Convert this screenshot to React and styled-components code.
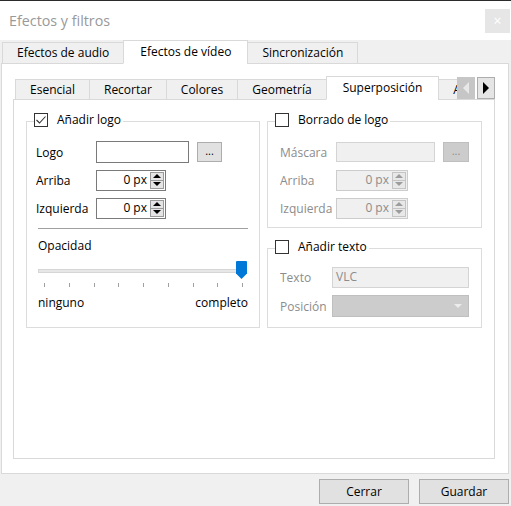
import React from "react";
import styled, { createGlobalStyle } from "styled-components";

const GlobalStyle = createGlobalStyle`
  html, body {
    margin: 0;
    padding: 0;
    background: #f0f0f0;
  }
  body {
    font-family: "Open Sans", "Noto Sans", sans-serif;
    font-size: 12px;
    color: #000;
  }
  * {
    box-sizing: border-box;
  }
`;

const Window = styled.div`
  width: 511px;
  height: 506px;
  display: flex;
  flex-direction: column;
  background: #f0f0f0;
  overflow: hidden;
`;

const TitleBar = styled.div`
  height: 40px;
  flex: none;
  border-top: 1px solid #2b2b2b;
  background: #fff;
  display: flex;
  align-items: center;
  justify-content: space-between;
  padding-left: 9px;
`;

const Title = styled.span`
  font-size: 14.3px;
  color: #999;
  line-height: 18px;
`;

const CloseButton = styled.div`
  width: 25px;
  height: 24px;
  margin-right: 1px;
  background: #e6e6e6;
  color: #fff;
  font-size: 14px;
  display: flex;
  align-items: center;
  justify-content: center;
`;

const TabBar = styled.div`
  display: flex;
  align-items: flex-end;
  height: 24px;
  flex: none;
  margin-bottom: -1px;
  padding-left: 2px;
  position: relative;
  z-index: 1;
`;

const Tab = styled.div`
  flex: none;
  height: ${(p) => (p.$active ? 24 : p.$h)}px;
  padding: 0 ${(p) => (p.$active ? 16 : 14)}px;
  margin-left: -1px;
  border: 1px solid #d9d9d9;
  border-bottom-color: ${(p) => (p.$active ? "#fff" : "#d9d9d9")};
  background: ${(p) => (p.$active ? "#fff" : "#f0f0f0")};
  display: flex;
  align-items: center;
  white-space: nowrap;
  line-height: 16px;

  &:first-child {
    margin-left: 0;
  }
`;

const OuterPane = styled.div`
  height: 411px;
  flex: none;
  margin: 0 2px 0 1px;
  border: 1px solid #d9d9d9;
  background: #fff;
  padding: 12px 13px 0 11px;
`;

const InnerTabRow = styled.div`
  display: flex;
  height: 24px;
  margin-bottom: -1px;
  position: relative;
  z-index: 1;
`;

const TabViewport = styled.div`
  width: 442px;
  margin-left: 2px;
  overflow: hidden;
  display: flex;
  align-items: flex-end;
`;

const ScrollButtons = styled.div`
  display: flex;
  gap: 2px;
  margin-top: 1px;
  height: 22px;
`;

const ScrollButton = styled.div`
  width: 18px;
  height: 22px;
  display: flex;
  align-items: center;
  justify-content: center;
  background: ${(p) => (p.$disabled ? "#c6c6c6" : "#e5e5e5")};
  border: 1px solid ${(p) => (p.$disabled ? "#c6c6c6" : "#adadad")};
`;

const Arrow = styled.span`
  width: 0;
  height: 0;
  border-top: 6px solid transparent;
  border-bottom: 6px solid transparent;
  ${(p) =>
    p.$dir === "left"
      ? `border-right: 6px solid ${p.$color};`
      : `border-left: 6px solid ${p.$color};`}
`;

const InnerPane = styled.div`
  height: 360px;
  border: 1px solid #d9d9d9;
  background: #fff;
  padding: 21px 12px 0 12px;
`;

const ContentGrid = styled.div`
  display: grid;
  grid-template-columns: 234px 215px;
  column-gap: 7px;
  align-items: stretch;
`;

const Column = styled.div`
  display: flex;
  flex-direction: column;
`;

const GroupBox = styled.div`
  border: 1px solid #dcdcdc;
  display: flex;
  flex-direction: column;
  margin-top: ${(p) => p.$mt || 0}px;
  padding: 0 ${(p) => p.$pr}px ${(p) => p.$pb || 0}px ${(p) => p.$pl}px;
`;

const GroupHeader = styled.div`
  display: flex;
  align-items: center;
  gap: 9px;
  height: 14px;
  margin-top: -9px;
  margin-left: ${(p) => p.$ml}px;
  padding-right: 2px;
  align-self: flex-start;
  background: #fff;
  line-height: 16px;
`;

const Check = styled.span`
  width: 14px;
  height: 14px;
  flex: none;
  border: 1px solid #333;
  background: #fff;
  display: flex;
  align-items: center;
  justify-content: center;
`;

const Rows = styled.div`
  display: flex;
  flex-direction: column;
  gap: ${(p) => p.$gap}px;
  margin-top: ${(p) => p.$mt}px;
`;

const FormRow = styled.div`
  display: flex;
  align-items: center;
  height: 22px;
`;

const Label = styled.span`
  width: ${(p) => p.$w}px;
  flex: none;
  overflow: hidden;
  white-space: nowrap;
  color: ${(p) => (p.$disabled ? "#8c8c8c" : "#000")};
  line-height: 17px;
`;

const TextInput = styled.div`
  width: ${(p) => p.$w}px;
  height: ${(p) => p.$h}px;
  border: 1px solid ${(p) => (p.$disabled ? "#d4d4d4" : "#7a7a7a")};
  background: ${(p) => (p.$disabled ? "#f0f0f0" : "#fff")};
  color: #8c8c8c;
  display: flex;
  align-items: center;
  padding-left: 3px;
  line-height: 16px;
`;

const DotsButton = styled.div`
  width: ${(p) => p.$w}px;
  height: 20px;
  margin-left: ${(p) => p.$ml}px;
  border: 1px solid ${(p) => (p.$disabled ? "#bfbfbf" : "#adadad")};
  background: ${(p) => (p.$disabled ? "#cccccc" : "#e1e1e1")};
  color: ${(p) => (p.$disabled ? "#8d8d8d" : "#000")};
  display: flex;
  align-items: center;
  justify-content: center;
  padding-bottom: 2px;
  font-size: 11px;
  line-height: 14px;
`;

const Spin = styled.div`
  width: ${(p) => p.$w}px;
  height: 21px;
  border: 1px solid ${(p) => (p.$disabled ? "#cccccc" : "#7a7a7a")};
  background: ${(p) => (p.$disabled ? "#f0f0f0" : "#fff")};
  color: ${(p) => (p.$disabled ? "#8c8c8c" : "#000")};
  display: flex;
  align-items: stretch;
`;

const SpinValue = styled.span`
  flex: 1;
  display: flex;
  align-items: center;
  justify-content: flex-end;
  padding-right: 3px;
  line-height: 16px;
`;

const SpinButtons = styled.div`
  width: 14px;
  display: flex;
  flex-direction: column;
  margin: 1px 1px 1px 0;
`;

const SpinButton = styled.div`
  flex: 1;
  border: 1px solid ${(p) => (p.$disabled ? "#c4c4c4" : "#9a9a9a")};
  border-top-width: ${(p) => (p.$down ? 0 : 1)}px;
  background: ${(p) => (p.$disabled ? "#e8e8e8" : "#e5e5e5")};
  display: flex;
  align-items: center;
  justify-content: center;
`;

const Tri = styled.span`
  width: 0;
  height: 0;
  border-left: 4px solid transparent;
  border-right: 4px solid transparent;
  ${(p) =>
    p.$down
      ? `border-top: 4px solid ${p.$color};`
      : `border-bottom: 4px solid ${p.$color};`}
`;

const Combo = styled.div`
  width: 137px;
  height: 22px;
  border: 1px solid #bfbfbf;
  background: #cccccc;
  display: flex;
  align-items: center;
  justify-content: flex-end;
  padding-right: 6px;
`;

const Lower = styled.div`
  margin-left: 2px;
  display: flex;
  flex-direction: column;
`;

const Separator = styled.div`
  height: 1px;
  background: #a0a0a0;
  margin-top: 9px;
`;

const Caption = styled.div`
  height: 16px;
  margin-top: 9px;
  display: flex;
  align-items: center;
  line-height: 16px;
`;

const Slider = styled.div`
  position: relative;
  height: 28px;
  margin-top: 5px;
  display: flex;
  flex-direction: column;
`;

const Groove = styled.div`
  height: 4px;
  margin-top: 10px;
  margin-right: 7px;
  background: #e7e7e7;
  border: 1px solid #d6d6d6;
`;

const Handle = styled.svg`
  position: absolute;
  right: 1px;
  top: 2px;
`;

const Ticks = styled.div`
  display: flex;
  justify-content: space-between;
  margin-top: 10px;
  padding: 0 5px 0 6px;
`;

const Tick = styled.span`
  width: 1px;
  height: 4px;
  background: #a0a0a0;
`;

const ScaleLabels = styled.div`
  height: 16px;
  margin-top: 8px;
  display: flex;
  align-items: center;
  justify-content: space-between;
  line-height: 16px;
`;

const Footer = styled.div`
  flex: 1;
  display: flex;
  justify-content: flex-end;
  align-items: flex-start;
  gap: 10px;
  padding: 5px 2px 0 0;
`;

const DialogButton = styled.div`
  width: 90px;
  height: 25px;
  border: 1px solid #adadad;
  background: #e1e1e1;
  display: flex;
  align-items: center;
  justify-content: center;
  line-height: 16px;
`;

const CheckBox = ({ checked }) => (
  <Check>
    {checked && (
      <svg width="12" height="12" viewBox="0 0 12 12">
        <polyline points="1.5,6 4.5,9 10.5,2.5" fill="none" stroke="#333" strokeWidth="1.1" />
      </svg>
    )}
  </Check>
);

const SpinBox = ({ w, disabled }) => {
  const c = disabled ? "#9c9c9c" : "#000";
  return (
    <Spin $w={w} $disabled={disabled}>
      <SpinValue>0 px</SpinValue>
      <SpinButtons>
        <SpinButton $disabled={disabled}>
          <Tri $color={c} />
        </SpinButton>
        <SpinButton $disabled={disabled} $down>
          <Tri $color={c} $down />
        </SpinButton>
      </SpinButtons>
    </Spin>
  );
};

const outerTabs = ["Efectos de audio", "Efectos de vídeo", "Sincronización"];
const innerTabs = ["Esencial", "Recortar", "Colores", "Geometría", "Superposición", "AtmoLight"];

export default function App() {
  return (
    <>
      <GlobalStyle />
      <Window>
        <TitleBar>
          <Title>Efectos y filtros</Title>
          <CloseButton>×</CloseButton>
        </TitleBar>

        <TabBar>
          {outerTabs.map((t) => (
            <Tab key={t} $h={22} $active={t === "Efectos de vídeo"}>
              {t}
            </Tab>
          ))}
        </TabBar>

        <OuterPane>
          <InnerTabRow>
            <TabViewport>
              {innerTabs.map((t) => (
                <Tab key={t} $h={21} $active={t === "Superposición"}>
                  {t}
                </Tab>
              ))}
            </TabViewport>
            <ScrollButtons>
              <ScrollButton $disabled>
                <Arrow $dir="left" $color="#e8e8e8" />
              </ScrollButton>
              <ScrollButton>
                <Arrow $dir="right" $color="#000" />
              </ScrollButton>
            </ScrollButtons>
          </InnerTabRow>

          <InnerPane>
            <ContentGrid>
              <GroupBox $pl={9} $pr={11}>
                <GroupHeader $ml={-2}>
                  <CheckBox checked />
                  <span>Añadir logo</span>
                </GroupHeader>
                <Rows $gap={6} $mt={14}>
                  <FormRow>
                    <Label $w={60}>Logo</Label>
                    <TextInput $w={93} $h={22} />
                    <DotsButton $w={25} $ml={8}>...</DotsButton>
                  </FormRow>
                  <FormRow>
                    <Label $w={60}>Arriba</Label>
                    <SpinBox w={70} />
                  </FormRow>
                  <FormRow>
                    <Label $w={60}>Izquierda</Label>
                    <SpinBox w={70} />
                  </FormRow>
                </Rows>
                <Lower>
                  <Separator />
                  <Caption>Opacidad</Caption>
                  <Slider>
                    <Groove />
                    <Handle width="11" height="18" viewBox="0 0 11 18">
                      <path d="M1 0 H10 Q11 0 11 1 V12.5 L5.5 18 L0 12.5 V1 Q0 0 1 0 Z" fill="#0078d7" />
                    </Handle>
                    <Ticks>
                      {Array.from({ length: 9 }, (_, i) => (
                        <Tick key={i} />
                      ))}
                    </Ticks>
                  </Slider>
                  <ScaleLabels>
                    <span>ninguno</span>
                    <span>completo</span>
                  </ScaleLabels>
                </Lower>
              </GroupBox>

              <Column>
                <GroupBox $pl={12} $pr={12} $pb={8}>
                  <GroupHeader $ml={-5}>
                    <CheckBox />
                    <span>Borrado de logo</span>
                  </GroupHeader>
                  <Rows $gap={6} $mt={14}>
                    <FormRow>
                      <Label $w={56} $disabled>Máscara</Label>
                      <TextInput $w={99} $h={20} $disabled />
                      <DotsButton $w={26} $ml={8} $disabled>...</DotsButton>
                    </FormRow>
                    <FormRow>
                      <Label $w={56} $disabled>Arriba</Label>
                      <SpinBox w={72} disabled />
                    </FormRow>
                    <FormRow>
                      <Label $w={56} $disabled>Izquierda</Label>
                      <SpinBox w={72} disabled />
                    </FormRow>
                  </Rows>
                </GroupBox>

                <GroupBox $pl={12} $pr={12} $pb={10} $mt={20}>
                  <GroupHeader $ml={-5}>
                    <CheckBox />
                    <span>Añadir texto</span>
                  </GroupHeader>
                  <Rows $gap={7} $mt={12}>
                    <FormRow>
                      <Label $w={52} $disabled>Texto</Label>
                      <TextInput $w={137} $h={21} $disabled>VLC</TextInput>
                    </FormRow>
                    <FormRow>
                      <Label $w={52} $disabled>Posición</Label>
                      <Combo>
                        <Tri $color="#ececec" $down />
                      </Combo>
                    </FormRow>
                  </Rows>
                </GroupBox>
              </Column>
            </ContentGrid>
          </InnerPane>
        </OuterPane>

        <Footer>
          <DialogButton>Cerrar</DialogButton>
          <DialogButton>Guardar</DialogButton>
        </Footer>
      </Window>
    </>
  );
}
